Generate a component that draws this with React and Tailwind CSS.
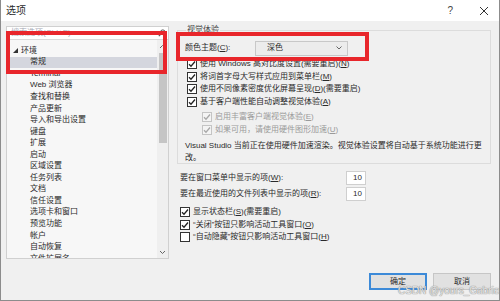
import React from 'react'

const font = { fontFamily: '"Liberation Sans", "Noto Sans CJK SC", sans-serif' }

const tree = [
  'Terminal', 'Web 浏览器', '查找和替换', '产品更新', '导入和导出设置', '键盘', '扩展', '启动',
  '区域设置', '任务列表', '文档', '信任设置', '选项卡和窗口', '预览功能', '帐户', '自动恢复', '文件扩展名',
]

function Box({ checked, disabled }) {
  const line = disabled ? '#a8a8a8' : '#222'
  return (
    <span
      className={`w-[10px] h-[10px] shrink-0 border flex items-center justify-center ${disabled ? 'border-[#c4c4c4] bg-[#f4f4f4]' : 'border-[#333] bg-white'}`}
    >
      {checked && (
        <svg width="8" height="8" viewBox="0 0 8 8">
          <path d="M1 4.2 L3 6.2 L7 1.5" fill="none" stroke={line} strokeWidth="1.3" />
        </svg>
      )}
    </span>
  )
}

function Check({ label, checked = true, disabled, className = '' }) {
  return (
    <div className={`flex items-center gap-[3px] ${className}`}>
      <Box checked={checked} disabled={disabled} />
      <span className={disabled ? 'text-[#9a9a9a]' : 'text-[#2a2a2a]'}>{label}</span>
    </div>
  )
}

export default function App() {
  return (
    <div style={font} className="relative w-[500px] h-[301px] overflow-hidden bg-[#f0f0f0] border-x border-b border-[#8c8c8c] text-[8px] leading-none text-[#2a2a2a]">
      {/* title bar */}
      <div className="h-[21px] bg-white flex items-center pl-[5px] pr-[10px] text-[10px]">
        <span>选项</span>
        <span className="ml-auto mr-[26px] text-[#444]">?</span>
        <svg width="10" height="10" viewBox="0 0 10 10">
          <path d="M1 1 L9 9 M9 1 L1 9" stroke="#333" strokeWidth="1" />
        </svg>
      </div>

      <div className="flex h-[249px]">
        {/* left: search + tree */}
        <div className="w-[168px] pl-[5px] pt-[5px] shrink-0">
          <div className="h-[233px] border border-[#d0d0d0] flex flex-col">
            <div className="h-[13px] bg-white border-b border-[#d9d9d9] flex items-center pl-[4px] pr-[2px] text-[#a3a7b3]">
              <span>搜索选项(Ctrl+E)</span>
              <svg className="ml-auto" width="8" height="8" viewBox="0 0 8 8">
                <circle cx="4.8" cy="3.2" r="2.3" fill="none" stroke="#555" strokeWidth="1" />
                <path d="M3.2 4.8 L0.8 7.2" stroke="#555" strokeWidth="1.2" />
              </svg>
            </div>
            <div className="flex flex-1 bg-[#f7f7f7] overflow-hidden">
              <div className="flex-1 pt-[5px] pl-[2px] overflow-hidden">
                <div className="h-[11.56px] flex items-center pl-[4px] gap-[3px]">
                  <svg width="5" height="5" viewBox="0 0 5 5"><path d="M5 0 L5 5 L0 5 Z" fill="#333" /></svg>
                  <span>环境</span>
                </div>
                <div className="h-[11.56px] flex items-center pl-[21px] bg-[#d4d6de]">常规</div>
                {tree.map(t => (
                  <div key={t} className="h-[11.56px] flex items-center pl-[21px] whitespace-nowrap">{t}</div>
                ))}
              </div>
              <div className="w-[11px] bg-[#efefef] flex flex-col items-center">
                <svg className="mt-[4px]" width="7" height="5" viewBox="0 0 7 5"><path d="M1 4 L3.5 1.5 L6 4" fill="none" stroke="#666" /></svg>
                <div className="mt-[4px] w-[8px] h-[90px] bg-[#c5c5c5]" />
                <svg className="mt-auto mb-[3px]" width="7" height="5" viewBox="0 0 7 5"><path d="M1 1 L3.5 3.5 L6 1" fill="none" stroke="#666" /></svg>
              </div>
            </div>
          </div>
        </div>

        {/* right panel */}
        <div className="w-[314px] ml-[8px] pt-[9px]">
          <div className="relative border border-[#dcdcdc] h-[134px] pl-[7px]">
            <span className="absolute -top-[5px] left-[8px] px-[1px] bg-[#f0f0f0] text-[#444]">视觉体验</span>
            <div className="h-[16px] mt-[9px] flex items-center">
              <span className="w-[70px]">颜色主题(<u>C</u>):</span>
              <div className="w-[93px] h-[15px] border border-[#c8c8c8] bg-[#ececec] flex items-center pl-[11px] pr-[5px]">
                <span>深色</span>
                <svg className="ml-auto" width="6" height="4" viewBox="0 0 6 4"><path d="M0.5 0.5 L3 3 L5.5 0.5" fill="none" stroke="#666" /></svg>
              </div>
            </div>
            <div className="mt-[2px] pl-[2px]">
              <Check className="h-[12.5px]" label={<>使用 Windows 高对比度设置(需要重启)(<u>N</u>)</>} />
              <Check className="h-[12.5px]" label={<>将词首字母大写样式应用到菜单栏(<u>M</u>)</>} />
              <Check className="h-[12.5px]" label={<>使用不同像素密度优化屏幕呈现(<u>D</u>)(需要重启)</>} />
              <Check className="h-[12.5px]" label={<>基于客户端性能自动调整视觉体验(<u>A</u>)</>} />
            </div>
            <div className="mt-[2px] pl-[17px]">
              <Check disabled className="h-[13px]" label={<>启用丰富客户端视觉体验(<u>E</u>)</>} />
              <Check disabled className="h-[13px]" label={<>如果可用，请使用硬件图形加速(<u>U</u>)</>} />
            </div>
            <p className="mt-[4px] leading-[12px] pr-[4px]">
              Visual Studio 当前正在使用硬件加速渲染。视觉体验设置将自动基于系统功能进行更改。
            </p>
          </div>

          <div className="mt-[7px] pl-[3px]">
            <div className="h-[14px] flex items-center">
              <span className="w-[166px]">要在窗口菜单中显示的项(<u>W</u>):</span>
              <div className="w-[20px] h-[14px] bg-white border border-[#cfcfcf] flex items-center justify-end pr-[3px]">10</div>
            </div>
            <div className="h-[14px] mt-[2px] flex items-center">
              <span className="w-[166px]">要在最近使用的文件列表中显示的项(<u>R</u>):</span>
              <div className="w-[20px] h-[14px] bg-white border border-[#cfcfcf] flex items-center justify-end pr-[3px]">10</div>
            </div>
            <div className="mt-[5px]">
              <Check className="h-[12.5px]" label={<>显示状态栏(<u>S</u>)(需要重启)</>} />
              <Check className="h-[12.5px]" label={<>“关闭”按钮只影响活动工具窗口(<u>O</u>)</>} />
              <Check className="h-[12.5px]" checked={false} label={<>“自动隐藏”按钮只影响活动工具窗口(<u>H</u>)</>} />
            </div>
          </div>
        </div>
      </div>

      {/* footer */}
      <div className="flex justify-end gap-[6px] pr-[8px] mt-[3px]">
        <button className="w-[58px] h-[17px] border border-[#3c8ad8] bg-[#e1e1e1] text-[8px] outline outline-1 outline-[#3c8ad8] -outline-offset-2">确定</button>
        <button className="w-[58px] h-[17px] border border-[#c6c6c6] bg-[#e1e1e1] text-[8px]">取消</button>
      </div>

      {/* overlays */}
      <div className="absolute left-[5px] top-[31px] w-[161px] h-[43px] border-[4px] border-[#e8262b] pointer-events-none" />
      <div className="absolute left-[175px] top-[32px] w-[193px] h-[29px] border-[4px] border-[#e8262b] pointer-events-none" />
      <span className="absolute left-[397px] top-[286px] text-[10px] text-[#e6e6e6] [text-shadow:0_0_1px_#8a8a8a,0_0_1px_#8a8a8a] whitespace-nowrap">CSDN @yours_Gabriel</span>
    </div>
  )
}
